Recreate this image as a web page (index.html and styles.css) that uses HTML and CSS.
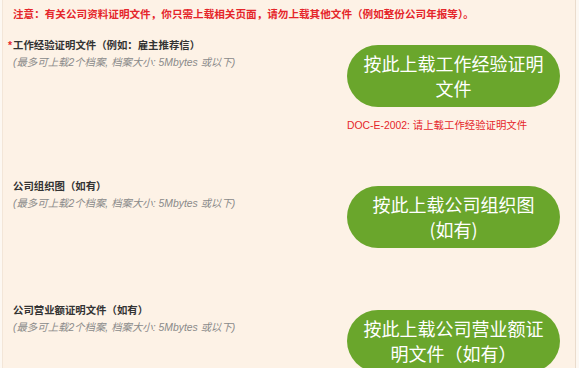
FILE: index.html
```html
<!DOCTYPE html>
<html lang="zh">
<head>
  <meta charset="UTF-8">
  <title>上载证明文件</title>
  <link rel="stylesheet" href="styles.css">
</head>
<body>
<div class="panel">
  <p class="notice">注意：有关公司资料证明文件，你只需上载相关页面，请勿上载其他文件（例如整份公司年报等）。</p>

  <div class="row">
    <div class="info">
      <div class="label"><span class="req">*</span>工作经验证明文件（例如：雇主推荐信）</div>
      <div class="hint">(最多可上载2个档案, 档案大小: 5Mbytes 或以下)</div>
    </div>
    <div class="action">
      <button class="upload">按此上载工作经验证明文件</button>
      <div class="error">DOC-E-2002: 请上载工作经验证明文件</div>
    </div>
  </div>

  <div class="row">
    <div class="info">
      <div class="label">公司组织图（如有）</div>
      <div class="hint">(最多可上载2个档案, 档案大小: 5Mbytes 或以下)</div>
    </div>
    <div class="action">
      <button class="upload">按此上载公司组织图 (如有)</button>
    </div>
  </div>

  <div class="row">
    <div class="info">
      <div class="label">公司营业额证明文件（如有）</div>
      <div class="hint">(最多可上载2个档案, 档案大小: 5Mbytes 或以下)</div>
    </div>
    <div class="action">
      <button class="upload">按此上载公司营业额证明文件（如有）</button>
    </div>
  </div>
</div>
</body>
</html>
```

FILE: styles.css
```css
html, body {
  margin: 0;
  background: #fdf8f2;
}

body {
  font-family: 'Liberation Sans', 'Noto Sans CJK SC', sans-serif;
  color: #333;
}

.panel {
  margin: 0 3px 0 2px;
  padding: 5px 15px 0 10px;
  background: #fdf2e6;
  border-left: 1px solid #f3e6d8;
  border-right: 1px solid #eadccd;
  min-height: 368px;
  box-sizing: border-box;
}

.notice {
  margin: 0 0 14px 0;
  font-size: 10.6px;
  line-height: 18px;
  font-weight: bold;
  color: #e5262b;
}

.row {
  display: flex;
  justify-content: space-between;
  min-height: 124px;
  padding-bottom: 45px;
  box-sizing: border-box;
}

.info {
  flex: 1;
}

.label {
  font-size: 10.4px;
  line-height: 17px;
  font-weight: bold;
  color: #333;
}

.req {
  color: #e5262b;
  margin-left: -5px;
  margin-right: 1px;
}

.hint {
  font-size: 10.4px;
  line-height: 17px;
  font-style: italic;
  color: #8a8a8a;
}

.action {
  width: 213px;
  padding-top: 8px;
}

.upload {
  display: block;
  width: 100%;
  padding: 6px 14px;
  background: #6aa62c;
  color: #fff;
  border: none;
  border-radius: 32px;
  font-family: 'Noto Sans CJK SC', sans-serif;
  font-size: 18px;
  line-height: 25px;
  text-align: center;
  cursor: pointer;
}

.error {
  margin-top: 12px;
  font-size: 10.4px;
  line-height: 14px;
  color: #e5262b;
}
```
